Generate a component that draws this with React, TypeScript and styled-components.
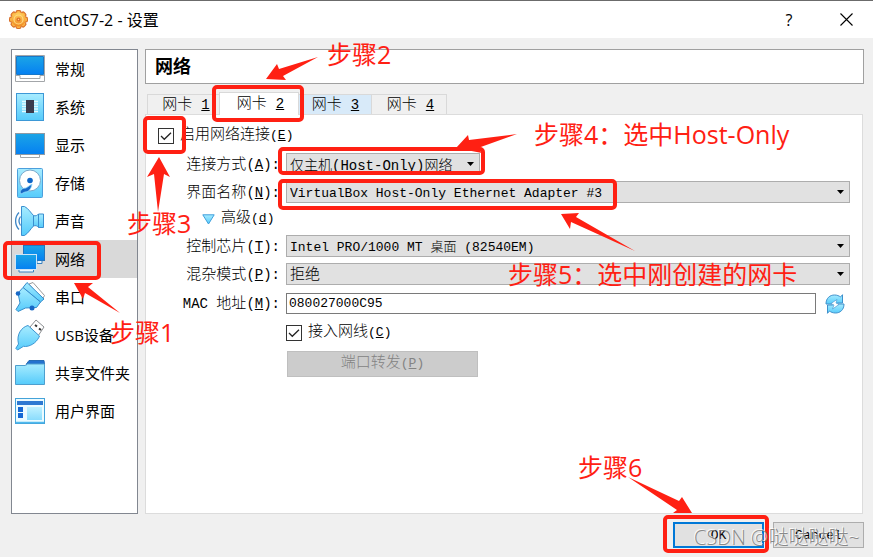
import React, { useState } from "react";
import styled, { createGlobalStyle, css } from "styled-components";

const UI_FONT = `"Open Sans", "Noto Sans CJK SC", sans-serif`;
const MONO_FONT = `"Liberation Mono", "Noto Sans CJK SC", monospace`;
const RED = "#ff2013";

const GlobalStyle = createGlobalStyle`
  * { box-sizing: border-box; }
  body { margin: 0; background: #f0f0f0; color: #000; font-family: ${UI_FONT}; font-size: 15px; }
  button, input, select { font: inherit; color: inherit; margin: 0; }
`;

/* ---------- window ---------- */

const Window = styled.div`
  position: relative;
  display: flex;
  flex-direction: column;
  min-height: 100vh;
  overflow: hidden;
  border-top: 1px solid #6b6b6b;
`;

const TitleBar = styled.header`
  display: flex;
  align-items: center;
  gap: 5px;
  height: 37px;
  padding: 0 16px 0 8px;
  background: #fff;
`;

const Title = styled.h1`
  flex: 1;
  margin: 0;
  font-size: 16px;
  font-weight: 400;
  line-height: 18px;
`;

const TitleButton = styled.button`
  display: grid;
  place-items: center;
  width: 22px;
  height: 28px;
  margin-left: 30px;
  padding: 0;
  border: 0;
  background: none;
  font-size: 16px;
`;

const Body = styled.div`
  flex: 1;
  display: grid;
  grid-template-columns: 127px minmax(0, 1fr);
  gap: 7px;
  padding: 11px 9px 8px 11px;
`;

/* ---------- sidebar ---------- */

const Sidebar = styled.nav`
  border: 1px solid #828790;
  background: #fff;
`;

const SideItem = styled.button<{ $active: boolean }>`
  display: flex;
  align-items: center;
  gap: 10px;
  width: 100%;
  height: 38px;
  padding: 0 0 0 3px;
  border: 0;
  background: ${(p) => (p.$active ? "#d9d9d9" : "transparent")};
  line-height: 20px;
  text-align: left;
  white-space: nowrap;

  svg { flex: none; }
`;

/* ---------- content ---------- */

const Content = styled.main`
  display: flex;
  flex-direction: column;
`;

const Heading = styled.h2`
  height: 35px;
  margin: 0 0 8px;
  padding: 0 9px;
  border: 1px solid #a0a0a0;
  background: #fff;
  font-size: 18px;
  font-weight: 700;
  line-height: 33px;
`;

const TabList = styled.div`
  display: flex;
  align-items: flex-end;
  height: 22px;
  padding-left: 2px;
`;

const Tab = styled.button<{ $state: "idle" | "hover" | "active" }>`
  width: 75px;
  height: 20px;
  padding: 0 0 0 3px;
  border: 1px solid #d9d9d9;
  border-width: 1px 1px 0 0;
  background: ${(p) => (p.$state === "hover" ? "#d8eaf9" : "#f0f0f0")};
  font-family: ${MONO_FONT};
  font-weight: 300;
  line-height: 20px;

  &:first-child { border-left-width: 1px; }

  ${(p) =>
    p.$state === "active" &&
    css`
      z-index: 1;
      width: 80px;
      height: 23px;
      margin: 0 -2px -1px -3px;
      border-left-width: 1px;
      background: #fff;
    `}
`;

const Panel = styled.form`
  flex: 1;
  margin-right: 1px;
  padding: 9px 12px 12px;
  border: 1px solid #dcdcdc;
  background: #fff;
  font-family: ${MONO_FONT};
  font-weight: 300;
  line-height: 22px;
`;

const Latin = styled.span`
  font-size: 13px;
`;

const LabelLatin = styled.span`
  font-size: 14px;
`;

const CheckLabel = styled.label`
  display: flex;
  align-items: center;
  gap: 6px;
  height: 24px;
  white-space: nowrap;
`;

const CheckBoxCell = styled.span`
  display: grid;
  width: 16px;
  height: 16px;

  > * { grid-area: 1 / 1; }
  svg { pointer-events: none; }
`;

const CheckInput = styled.input`
  appearance: none;
  width: 16px;
  height: 16px;
  border: 1px solid #333;
  background: #fff;

  &:not(:checked) + svg { display: none; }
`;

const Fields = styled.div`
  display: grid;
  grid-template-columns: 122px minmax(0, 1fr);
  align-items: center;
  gap: 6px;
  margin-top: 5px;
`;

const FieldLabel = styled.label`
  justify-self: end;
  height: 22px;
  padding-top: 2px;
  line-height: 20px;
  white-space: nowrap;
`;

const Advanced = styled.button`
  grid-column: 1 / -1;
  display: flex;
  align-items: center;
  gap: 6px;
  height: 20px;
  padding: 0 0 0 44px;
  border: 0;
  background: none;
  font-weight: 300;
`;

const SelectCell = styled.div<{ $compact?: boolean }>`
  display: grid;
  align-items: center;
  width: ${(p) => (p.$compact ? "194px" : "auto")};

  > * { grid-area: 1 / 1; }
  svg {
    justify-self: end;
    margin-right: 6px;
    pointer-events: none;
  }
`;

const Select = styled.select<{ $size: number }>`
  appearance: none;
  width: 100%;
  height: 22px;
  padding: 1px 16px 0 3px;
  border: 1px solid #adadad;
  border-radius: 0;
  background: #e1e1e1;
  font-size: ${(p) => p.$size}px;
  font-weight: 300;
`;

const MacRow = styled.div`
  display: flex;
  align-items: center;
  gap: 9px;
  height: 24px;
  padding: 2px 5px 1px 0;
`;

const TextInput = styled.input`
  flex: 1;
  min-width: 0;
  height: 21px;
  padding: 0 2px;
  border: 1px solid #7a7a7a;
  font-size: 13px;
`;

const IconButton = styled.button`
  display: block;
  padding: 0;
  border: 0;
  background: none;

  svg { display: block; }
`;

const SecondColumn = styled.div`
  grid-column: 2;
`;

const ForwardButton = styled.button`
  display: block;
  width: 191px;
  height: 26px;
  margin: 0 0 0 1px;
  padding: 0;
  border: 1px solid #bfbfbf;
  background: #ccc;
  color: #838383;
`;

const Footer = styled.footer`
  display: flex;
  justify-content: flex-end;
  gap: 9px;
  padding: 0 9px 9px;
`;

const DialogButton = styled.button<{ $primary?: boolean }>`
  width: 91px;
  height: 26px;
  padding: 0;
  border: ${(p) => (p.$primary ? "2px solid #0078d7" : "1px solid #adadad")};
  background: #e1e1e1;
  font-family: ${MONO_FONT};
  font-size: 13px;
`;

/* ---------- notes drawn over the dialog ---------- */

const NoteLayer = styled.div`
  position: absolute;
  top: -1px;
  left: 0;
  z-index: 2;
  pointer-events: none;
`;

const Arrows = styled.svg`
  position: absolute;
  top: 0;
  left: 0;
  fill: ${RED};
`;

const NoteBox = styled.div<{ $x: number; $y: number; $w: number; $h: number }>`
  position: absolute;
  left: ${(p) => p.$x}px;
  top: ${(p) => p.$y}px;
  width: ${(p) => p.$w}px;
  height: ${(p) => p.$h}px;
  border: 4px solid ${RED};
  border-radius: 5px;
`;

const NoteText = styled.p<{ $x: number; $y: number }>`
  position: absolute;
  left: ${(p) => p.$x}px;
  top: ${(p) => p.$y}px;
  margin: 0;
  color: ${RED};
  font-size: 25px;
  line-height: 32px;
  white-space: nowrap;
`;

const Watermark = styled.p`
  position: absolute;
  left: 694px;
  top: 524px;
  margin: 0;
  color: rgba(125, 125, 125, 0.9);
  font-size: 20px;
  font-weight: 300;
  line-height: 28px;
  text-shadow: -1px -1px 0 rgba(255, 255, 255, 0.85);
  white-space: nowrap;
`;

/* ---------- icons ---------- */

const HiddenSvg = styled.svg`
  display: block;
  width: 0;
  height: 0;
`;

const Gradients = () => (
  <HiddenSvg aria-hidden="true">
    <defs>
      <linearGradient id="screen" x1="0" y1="0" x2="0" y2="1">
        <stop offset="0" stopColor="#1ba5e6" />
        <stop offset="1" stopColor="#0580f2" />
      </linearGradient>
      <linearGradient id="aqua" x1="0" y1="0" x2="0" y2="1">
        <stop offset="0" stopColor="#a8ecff" />
        <stop offset="1" stopColor="#55cbfb" />
      </linearGradient>
      <linearGradient id="gold" x1="0" y1="0" x2="0" y2="1">
        <stop offset="0" stopColor="#ffd05c" />
        <stop offset="1" stopColor="#f08a24" />
      </linearGradient>
    </defs>
  </HiddenSvg>
);

const gearTeeth = [0, 45, 90, 135, 180, 225, 270, 315];

const GearIcon = () => (
  <svg width="21" height="21" viewBox="0 0 21 21" aria-hidden="true">
    {gearTeeth.map((a) => (
      <rect key={a} x="7.5" y="1" width="6" height="6" rx="2" fill="#d9702a" transform={`rotate(${a} 10.5 10.5)`} />
    ))}
    {gearTeeth.map((a) => (
      <rect key={a} x="8.500" y="2" width="4" height="6" rx="1.500" fill="#fbb445" transform={`rotate(${a} 10.5 10.5)`} />
    ))}
    <circle cx="10.5" cy="10.5" r="7" fill="url(#gold)" />
    <circle cx="10.5" cy="10.5" r="4.500" fill="none" stroke="#ffdb85" strokeWidth="1.200" />
    <circle cx="10.5" cy="10.5" r="2" fill="#e0702c" />
    <circle cx="10.5" cy="10.5" r=".7" fill="#ffd777" />
  </svg>
);

const icons: Record<string, React.ReactNode> = {
  general: (
    <>
      <path d="M.5 2.5h29v26H.5z" fill="#fff" stroke="#a3a6a9" />
      <path d="M1.5 3.5h27v18h-27z" fill="url(#screen)" stroke="#1878c8" />
      <path d="M1 22.500h4v3h20v-3h4" fill="none" stroke="#a3a6a9" />
    </>
  ),
  system: (
    <>
      <rect x="1.5" y="2.5" width="27" height="27" fill="url(#aqua)" stroke="#3d98d6" />
      <path d="M7 10.500h16M7 13h16M7 15.500h16M7 18h16M7 20.500h16" stroke="#e5fbff" strokeWidth="1.5" />
      <rect x="11" y="9" width="8" height="13" fill="#3b3b4d" />
    </>
  ),
  display: (
    <>
      <path d="M5.5 25v3.500h19V25" fill="#fff" stroke="#a3a6a9" />
      <rect x=".5" y="4.5" width="29" height="21" fill="url(#screen)" stroke="#8d9aa5" />
    </>
  ),
  storage: (
    <>
      <rect x="2.5" y="1.5" width="25" height="29" rx="1" fill="url(#aqua)" stroke="#4c9fdc" />
      <circle cx="15" cy="13.5" r="10.5" fill="#fff" stroke="#7ba9cc" />
      <circle cx="15" cy="13.5" r="2.8" fill="#0d65c8" />
      <path d="M17 17c-1 6-4 8-7 8l-4 2-1-2c1-3 3-4 6-4z" fill="#1769c7" stroke="#8fd7fa" strokeWidth=".8" />
    </>
  ),
  sound: (
    <>
      <path d="M6.500 1.500h3c4 2 6 6 9 9V21c-3 3-5 7-9 9.500h-3z" fill="url(#aqua)" stroke="#3a8fd0" />
      <path d="M18.500 10.500c2 1 4-.2 5-1.500h5v13.500h-5c-1-1.500-3-2.500-5-1.500z" fill="url(#aqua)" stroke="#3a8fd0" />
      <path d="M23.500 9v13.500" stroke="#3a8fd0" />
      <path d="M4 7.500C-.5 12-.5 20 4 24.500M5.500 11.500c-2 3-2 6 0 9" fill="none" stroke="#3d86c6" strokeWidth="1.3" />
    </>
  ),
  network: (
    <>
      <rect x="8.5" y="2.5" width="21" height="15" fill="url(#screen)" stroke="#2675bd" />
      <path d="M22 18v2.500h5V18" fill="#e6f5ff" stroke="#3a80bd" />
      <rect x=".5" y="11.5" width="21" height="15" fill="url(#screen)" stroke="#cde5f8" />
      <path d="M4 27v2h14.500v-2" fill="#eef8ff" stroke="#3a80bd" />
    </>
  ),
  serial: (
    <>
      <path d="m14 3 4-1.500 11.500 13L27 19z" fill="#fff" stroke="#999" />
      <path d="m8 6.500 4-5L29 18l-3.500 3z" fill="url(#aqua)" stroke="#358ccc" />
      <path d="M8 6.500 25.500 21l-4 5.500-11 .5L3 30.500 1 28.500 5 22 3 12z" fill="url(#aqua)" stroke="#358ccc" />
      <circle cx="3" cy="12.5" r="2.3" fill="#1768c6" />
      <circle cx="17" cy="27" r="2.5" fill="#1768c6" />
    </>
  ),
  usb: (
    <>
      <path d="m15 8 6-7 8 7-6 9z" fill="#fff" stroke="#8a8d90" />
      <path d="m20 6 2 1.500M24 9.500l2 1.500" stroke="#333" strokeWidth="2" />
      <path
        d="M13 6.500 24.500 17c-2 5-7 10-14 10.500l-2-.2L2.500 31 .8 29.300 3.500 25C1 15 7 8 13 6.500z"
        fill="url(#aqua)"
        stroke="#3b95d2"
      />
    </>
  ),
  folder: (
    <>
      <path d="m11 7.500 3-4h15l.5 4z" fill="#2472cf" stroke="#276cb5" />
      <path d="M.5 8.500h10l2-1.500h17v20.500H.5z" fill="url(#aqua)" stroke="#4e9fce" />
    </>
  ),
  ui: (
    <>
      <rect x=".5" y="3.5" width="29" height="25" fill="#ecfbff" stroke="#44a3d9" />
      <path d="M1 27.500h28" stroke="#4fb9ee" strokeWidth="1.5" />
      <path d="M2 6h26v4H2z" fill="#2e79d2" />
      <path d="M3 12h5v5H3zM3 18h5v5H3z" fill="#1668d4" />
      <path d="M12 12h15v13H12z" fill="url(#aqua)" opacity=".65" />
    </>
  ),
};

const CheckMark = () => (
  <svg width="16" height="16" viewBox="0 0 16 16" aria-hidden="true">
    <path d="m3 8 3.300 3.300L13 4.700" fill="none" stroke="#222" strokeWidth="1.3" />
  </svg>
);

const DownArrow = () => (
  <svg width="7" height="4" viewBox="0 0 7 4" aria-hidden="true">
    <path d="M0 0h7L3.500 4z" />
  </svg>
);

const RefreshIcon = () => (
  <svg width="20" height="20" viewBox="0 0 20 20" aria-hidden="true">
    <path
      d="M1 10C1 4 5 1 9.500 1c2.500 0 4.500.8 6 2l2-2.300V9h-5l-1.500 1z"
      fill="url(#aqua)"
      stroke="#3e90cc"
    />
    <path
      d="M19 10c0 6-4 9-8.500 9-2.500 0-4.500-.8-6-2l-2 2.300V11h5L9 10z"
      fill="url(#aqua)"
      stroke="#3e90cc"
    />
    <path d="m12 5.500-6 4L9 11l-1.500 4 6.500-4.500-3-1.500z" fill="#fff" stroke="#3e90cc" strokeWidth=".6" />
  </svg>
);

/* ---------- data ---------- */

const sections = [
  ["general", "常规"],
  ["system", "系统"],
  ["display", "显示"],
  ["storage", "存储"],
  ["sound", "声音"],
  ["network", "网络"],
  ["serial", "串口"],
  ["usb", "USB设备"],
  ["folder", "共享文件夹"],
  ["ui", "用户界面"],
];

const noteBoxes = [
  [3, 241, 98, 39],
  [212, 85, 92, 37],
  [143, 116, 43, 38],
  [278, 147, 207, 28],
  [278, 179, 339, 31],
  [663, 515, 106, 38],
];

const notes: [number, number, string][] = [
  [110, 316, "步骤1"],
  [327, 38, "步骤2"],
  [127, 207, "步骤3"],
  [534, 118, "步骤4：选中Host-Only"],
  [508, 258, "步骤5：选中刚创建的网卡"],
  [578, 451, "步骤6"],
];

const arrows = [
  "74,283 93,283 88,287 120,313 85,293 83,299",
  "266,79 277,64 279,69 318,57 283,76 286,80",
  "159,157 170,177 164,174 158,212 154,174 147,177",
  "456,148 468,135 469,140 517,134 478,148 482,153",
  "561,214 579,213 576,217 635,251 571,222 570,229",
  "692,513 682,497 679,501 628,477 677,510 673,513",
];

const Mnemonic = ({ letter }: { letter: string }) => (
  <Latin>
    (<u>{letter}</u>)
  </Latin>
);

type FieldNameProps = { htmlFor: string; prefix?: string; text: string; letter: string };

const FieldName = ({ htmlFor, prefix, text, letter }: FieldNameProps) => (
  <FieldLabel htmlFor={htmlFor}>
    {prefix && <LabelLatin>{prefix} </LabelLatin>}
    {text}
    <LabelLatin>
      (<u>{letter}</u>):
    </LabelLatin>
  </FieldLabel>
);

type ComboProps = { id: string; value: string; size?: number; compact?: boolean };

const Combo = ({ id, value, size = 13, compact }: ComboProps) => (
  <SelectCell $compact={compact}>
    <Select id={id} $size={size} defaultValue={value}>
      <option>{value}</option>
    </Select>
    <DownArrow />
  </SelectCell>
);

const Check = ({ text, letter }: { text: string; letter: string }) => (
  <CheckLabel>
    <CheckBoxCell>
      <CheckInput type="checkbox" defaultChecked />
      <CheckMark />
    </CheckBoxCell>
    <span>
      {text}
      <Mnemonic letter={letter} />
    </span>
  </CheckLabel>
);

export default function App() {
  const [section, setSection] = useState("network");
  const [tab, setTab] = useState(2);

  return (
    <Window>
      <GlobalStyle />
      <Gradients />
      <TitleBar>
        <GearIcon />
        <Title>CentOS7-2 - 设置</Title>
        <TitleButton aria-label="帮助">?</TitleButton>
        <TitleButton aria-label="关闭">
          <svg width="13" height="13" viewBox="0 0 13 13" aria-hidden="true">
            <path d="m.5.5 12 12M12.500.5l-12 12" stroke="#000" strokeWidth="1.1" />
          </svg>
        </TitleButton>
      </TitleBar>

      <Body>
        <Sidebar>
          {sections.map(([key, name]) => (
            <SideItem key={key} $active={key === section} onClick={() => setSection(key)}>
              <svg width="30" height="32" viewBox="0 0 30 32" aria-hidden="true">
                {icons[key]}
              </svg>
              {name}
            </SideItem>
          ))}
        </Sidebar>

        <Content>
          <Heading>网络</Heading>
          <TabList role="tablist">
            {[1, 2, 3, 4].map((n) => (
              <Tab
                key={n}
                role="tab"
                aria-selected={n === tab}
                $state={n === tab ? "active" : n === 3 ? "hover" : "idle"}
                onClick={() => setTab(n)}
              >
                网卡 <LabelLatin as="u">{n}</LabelLatin>
              </Tab>
            ))}
          </TabList>

          <Panel onSubmit={(e) => e.preventDefault()}>
            <Check text="启用网络连接" letter="E" />
            <Fields>
              <FieldName htmlFor="attached" text="连接方式" letter="A" />
              <Combo id="attached" value="仅主机(Host-Only)网络" size={14} compact />

              <FieldName htmlFor="adapter" text="界面名称" letter="N" />
              <Combo id="adapter" value="VirtualBox Host-Only Ethernet Adapter #3" />

              <Advanced type="button" aria-expanded="true">
                <svg width="13" height="11" viewBox="0 0 13 11" aria-hidden="true">
                  <path d="M.8.8h11.400L6.500 10z" fill="url(#aqua)" stroke="#3f9fdc" />
                </svg>
                <span>
                  高级
                  <Mnemonic letter="d" />
                </span>
              </Advanced>

              <FieldName htmlFor="chip" text="控制芯片" letter="T" />
              <Combo id="chip" value="Intel PRO/1000 MT 桌面 (82540EM)" />

              <FieldName htmlFor="promiscuous" text="混杂模式" letter="P" />
              <Combo id="promiscuous" value="拒绝" size={15} />

              <FieldName htmlFor="mac" prefix="MAC" text="地址" letter="M" />
              <MacRow>
                <TextInput id="mac" defaultValue="080027000C95" />
                <IconButton type="button" aria-label="刷新">
                  <RefreshIcon />
                </IconButton>
              </MacRow>

              <SecondColumn>
                <Check text="接入网线" letter="C" />
              </SecondColumn>
              <SecondColumn>
                <ForwardButton type="button" disabled>
                  端口转发
                  <Mnemonic letter="P" />
                </ForwardButton>
              </SecondColumn>
            </Fields>
          </Panel>
        </Content>
      </Body>

      <Footer>
        <DialogButton $primary>OK</DialogButton>
        <DialogButton>Cancel</DialogButton>
      </Footer>

      <NoteLayer>
        <Arrows width="873" height="557" viewBox="0 0 873 557" aria-hidden="true">
          {arrows.map((points) => (
            <polygon key={points} points={points} />
          ))}
        </Arrows>
        {noteBoxes.map(([x, y, w, h]) => (
          <NoteBox key={`${x}-${y}`} $x={x} $y={y} $w={w} $h={h} />
        ))}
        {notes.map(([x, y, text]) => (
          <NoteText key={text} $x={x} $y={y}>
            {text}
          </NoteText>
        ))}
        <Watermark>CSDN @哒哒哒哒~</Watermark>
      </NoteLayer>
    </Window>
  );
}
